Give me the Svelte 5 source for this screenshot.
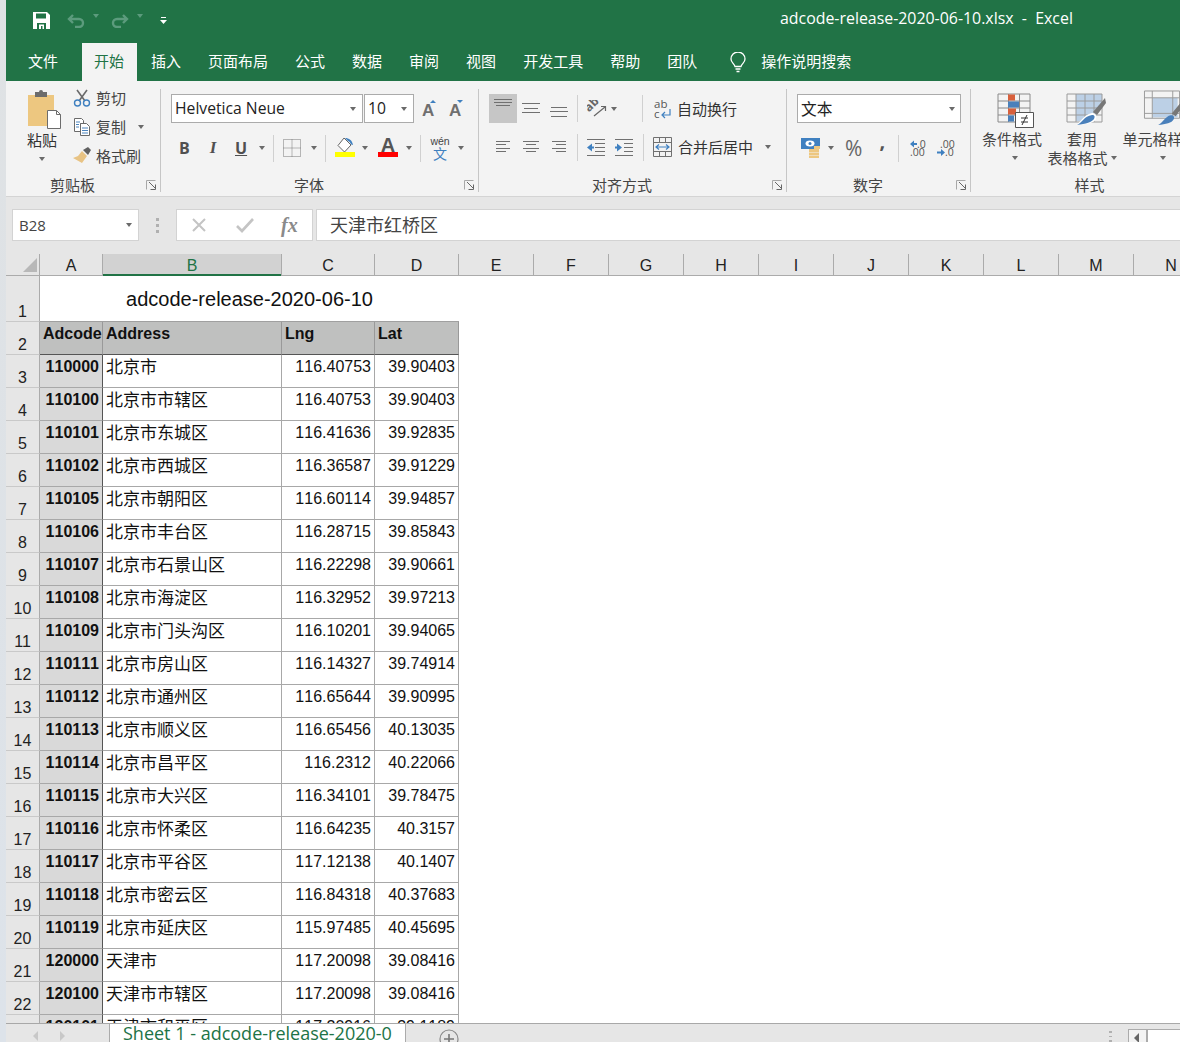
<script>
  const rows = [
    ['110000','北京市','116.40753','39.90403'],['110100','北京市市辖区','116.40753','39.90403'],
    ['110101','北京市东城区','116.41636','39.92835'],['110102','北京市西城区','116.36587','39.91229'],
    ['110105','北京市朝阳区','116.60114','39.94857'],['110106','北京市丰台区','116.28715','39.85843'],
    ['110107','北京市石景山区','116.22298','39.90661'],['110108','北京市海淀区','116.32952','39.97213'],
    ['110109','北京市门头沟区','116.10201','39.94065'],['110111','北京市房山区','116.14327','39.74914'],
    ['110112','北京市通州区','116.65644','39.90995'],['110113','北京市顺义区','116.65456','40.13035'],
    ['110114','北京市昌平区','116.2312','40.22066'],['110115','北京市大兴区','116.34101','39.78475'],
    ['110116','北京市怀柔区','116.64235','40.3157'],['110117','北京市平谷区','117.12138','40.1407'],
    ['110118','北京市密云区','116.84318','40.37683'],['110119','北京市延庆区','115.97485','40.45695'],
    ['120000','天津市','117.20098','39.08416'],['120100','天津市市辖区','117.20098','39.08416'],
    ['120101','天津市和平区','117.20916','39.1189']
  ];
  const tabs = ['插入','页面布局','公式','数据','审阅','视图','开发工具','帮助','团队'];
  const cols = ['E','F','G','H','I','J','K','L','M','N'];
</script>

{#snippet launcher()}
  <svg class="launch" width="11" height="10" viewBox="0 0 11 10">
    <path d="M.5 9.500V.5h9" fill="none" stroke="#a8a8a8"/>
    <path d="M3 2l6 6M9.500 4.500v5h-5" fill="none" stroke="#666"/>
  </svg>
{/snippet}

{#snippet lines(items)}
  <svg width="20" height="18" viewBox="0 0 20 18">
    {#each items as l}<path d="M{l[0]} {l[2]}.5H{l[1]}" stroke="#707070" fill="none"/>{/each}
  </svg>
{/snippet}

<div class="page">
  <div class="strip"></div>
  <div class="main">
    <header class="title">
      <div class="qat">
        <svg class="save" width="17" height="17" viewBox="0 0 17 17"><path fill="#fff" d="M0 0h14l3 3v14H0z"/><path fill="#217346" d="M3 1.500h10v5H3zM4 11h9v6H4z"/><path fill="#fff" d="M6 12.500h5V17H9.500v-3H8v3H6z"/></svg>
        <svg class="undo" width="18" height="14" viewBox="0 0 18 14"><path d="M6 1L2 5l4 4M2.500 5H12a4 4 0 0 1 0 8H8" fill="none" stroke="#5c9b7d" stroke-width="2.400"/></svg>
        <i class="car dim"></i>
        <svg class="redo" width="18" height="14" viewBox="0 0 18 14"><path d="M12 1l4 4-4 4M15.500 5H6a4 4 0 0 0 0 8h4" fill="none" stroke="#5c9b7d" stroke-width="2.400"/></svg>
        <i class="car dim"></i>
        <svg class="cust" width="7" height="7" viewBox="0 0 7 7"><path d="M1 .5h5" stroke="#fff"/><path d="M0 3h7L3.500 7z" fill="#fff"/></svg>
      </div>
      <div class="doc">adcode-release-2020-06-10.xlsx&nbsp; -&nbsp; Excel</div>
    </header>

    <nav class="tabs">
      <span class="tab file">文件</span>
      <span class="tab on">开始</span>
      {#each tabs as t}<span class="tab">{t}</span>{/each}
      <svg class="bulb" width="16" height="21" viewBox="0 0 16 21"><path d="M5 14.500C4 11.500 1 10.500 1 7a7 7 0 0 1 14 0c0 3.500-3 4.500-4 7.500z" fill="none" stroke="#fff" stroke-width="1.300"/><path d="M5.500 17h5M6.500 19.500h3" stroke="#fff" stroke-width="1.300"/></svg>
      <span class="search">操作说明搜索</span>
    </nav>

    <section class="ribbon">
      <div class="group g-clip">
        <div class="body clip">
          <div class="paste">
            <svg width="36" height="42" viewBox="0 0 36 42"><path d="M2 8h26v31H2z" fill="#edc780"/><path d="M9 5h4a2 2 0 0 1 4 0h4v5H9z" fill="#6c6c6c"/><path d="M21.500 23.500h9l4 4v14h-13z" fill="#fff" stroke="#6c6c6c"/><path d="M30.500 23.500v4h4" fill="none" stroke="#6c6c6c"/></svg>
            <span class="pl">粘贴</span>
            <i class="car"></i>
          </div>
          <div class="small">
            <div class="sm"><svg width="18" height="18" viewBox="0 0 18 18"><path d="M4 1l8 11M14 1L6 12" stroke="#6a6a6a" stroke-width="1.600" fill="none"/><circle cx="4.500" cy="14" r="3" fill="none" stroke="#3f80c0" stroke-width="1.400"/><circle cx="13.500" cy="14" r="3" fill="none" stroke="#3f80c0" stroke-width="1.400"/></svg><span>剪切</span></div>
            <div class="sm"><svg width="18" height="18" viewBox="0 0 18 18"><path d="M1.500.5h7l2 2v3h-3v8h-6z" fill="#fff" stroke="#6a6a6a"/><path d="M7.500 5.500h6l3 3v9h-9z" fill="#fff" stroke="#6a6a6a"/><path d="M9 10h6M9 12.500h6M9 15h6M3 4h4M3 6.500h3M3 9h3" stroke="#4c84bd"/></svg><span>复制</span><i class="car m12"></i></div>
            <div class="sm"><svg width="18" height="18" viewBox="0 0 18 18"><path d="M10 3l5-3 3 3-3 5z" fill="#606060"/><path d="M9 4l5 5-5 7-9-5 5-2z" fill="#e8c384"/></svg><span>格式刷</span></div>
          </div>
        </div>
        <div class="lab"><i></i><b>剪贴板</b>{@render launcher()}</div>
      </div>

      <div class="group g-font">
        <div class="body stack">
          <div class="r1">
            <div class="sel fn"><span>Helvetica Neue</span><i class="car"></i></div>
            <div class="sel fs"><span>10</span><i class="car"></i></div>
            <svg class="ga" width="15" height="20" viewBox="0 0 15 20"><text x="0" y="17" class="bigA">A</text><path d="M8 4l3-3 3 3z" fill="#3f80c0"/></svg>
            <svg class="sa" width="15" height="20" viewBox="0 0 15 20"><text x="0" y="17" class="bigA">A</text><path d="M8 1h6l-3 3z" fill="#3f80c0"/></svg>
          </div>
          <div class="r2">
            <span class="bi bb">B</span><span class="bi ii">I</span><span class="bi uu">U</span>
            <i class="car c-u"></i><em class="sep"></em>
            <svg class="bord" width="18" height="18" viewBox="0 0 18 18"><path d="M.5.500h17v17H.5zM9 .5v17M.5 9h17" fill="none" stroke="#777" stroke-dasharray="1 1"/></svg>
            <i class="car c-b"></i><em class="sep s2"></em>
            <svg class="fill" width="20" height="22" viewBox="0 0 20 22"><path d="M9 1l7 7-6.500 7L3 8.500z" fill="#fff" stroke="#666"/><path d="M10 1c4 0 7 2 8 7-3 0-2-3-5-4z" fill="#3f80c0"/><path d="M0 15h20v5H0z" fill="#ffff00"/></svg>
            <i class="car c-f"></i>
            <div class="fc"><span>A</span><u></u></div>
            <i class="car c-a"></i><em class="sep s3"></em>
            <div class="wen"><span class="w1">wén</span><span class="w2">文</span></div>
            <i class="car c-w"></i>
          </div>
        </div>
        <div class="lab"><i></i><b>字体</b>{@render launcher()}</div>
      </div>

      <div class="group g-align">
        <div class="body stack">
          <div class="ar1">
            <div class="hi">{@render lines([[1,19,3],[1,19,6],[3,17,9]])}</div>
            <div class="ai">{@render lines([[1,19,3],[3,17,8],[1,19,12]])}</div>
            <div class="ai">{@render lines([[2,18,7],[1,19,11],[2,18,16]])}</div>
            <em class="sep v"></em>
            <svg class="ori" width="20" height="18" viewBox="0 0 20 18"><text x="0" y="0" transform="translate(2 11) rotate(-45) translate(-1 1)" class="abt">ab</text><path d="M7 16L18 7M14 6.500h4.500V11" stroke="#666" fill="none" stroke-width="1.200"/></svg>
            <i class="car c-o"></i>
            <em class="sep v w2s"></em>
            <svg class="wrap" width="18" height="22" viewBox="0 0 18 22"><text x="0" y="10" class="abc">ab</text><text x="0" y="20" class="abc">c</text><path d="M16 11v6H9M11 14l-3 3 3 3" stroke="#3f80c0" fill="none" stroke-width="1.200"/></svg>
            <span class="awt">自动换行</span>
          </div>
          <div class="ar2">
            <div class="ai">{@render lines([[3,17,3],[3,13,6],[3,17,10],[3,13,13]])}</div>
            <div class="ai">{@render lines([[2,18,3],[5,15,6],[2,18,10],[5,15,13]])}</div>
            <div class="ai">{@render lines([[3,17,3],[7,17,6],[3,17,10],[7,17,13]])}</div>
            <em class="sep v2"></em>
            <svg class="ind" width="18" height="17" viewBox="0 0 18 17"><path d="M0 .5h18M8 4.500h10M8 8.500h10M8 12.500h10M0 16.500h18" stroke="#707070"/><path d="M0 8.500l5-4v3h2v2H5v3z" fill="#3f80c0"/></svg>
            <svg class="ind ind2" width="18" height="17" viewBox="0 0 18 17"><path d="M0 .5h18M9 4.500h9M9 8.500h9M9 12.500h9M0 16.500h18" stroke="#707070"/><path d="M7 8.500l-5-4v3H0v2h2v3z" fill="#3f80c0"/></svg>
            <em class="sep v2 s4"></em>
            <svg class="merge" width="19" height="20" viewBox="0 0 19 20"><path d="M.5.500h18v19H.5zM.5 5.500h18M.5 14.500h18M6.500.5v5M12.500.5v5M6.500 14.500v5M12.500 14.500v5" fill="none" stroke="#707070"/><path d="M3 10h13M6 7.500L3 10l3 2.500M13 7.500l3 2.500-3 2.500" fill="none" stroke="#3f80c0" stroke-width="1.200"/></svg>
            <span class="mgt">合并后居中</span>
            <i class="car c-m"></i>
          </div>
        </div>
        <div class="lab"><i></i><b>对齐方式</b>{@render launcher()}</div>
      </div>

      <div class="group g-num">
        <div class="body stack">
          <div class="sel nf"><span>文本</span><i class="car"></i></div>
          <div class="nr">
            <svg class="acc" width="20" height="20" viewBox="0 0 20 20"><path d="M0 0h19v11H0z" fill="#3f80c0"/><ellipse cx="9" cy="5.500" rx="4.500" ry="3" fill="#fff"/><circle cx="9" cy="5.500" r="1.500" fill="#3f80c0"/><path d="M8 11h10v3H8zM8 14.500h10v2.500H8zM8 17.500h10V20H8z" fill="#edc780"/><path d="M13 8h6v3h-6z" fill="#edc780"/></svg>
            <i class="car c-ac"></i>
            <span class="pct">%</span>
            <span class="cma">,</span>
            <em class="sep v3"></em>
            <svg class="dec" width="18" height="18" viewBox="0 0 18 18"><path d="M1 5l4-3.500V4h3v2H5v2.500z" fill="#3f80c0"/><text x="8" y="9" class="dt">.0</text><text x="1" y="17" class="dt">.00</text></svg>
            <svg class="dec" width="18" height="18" viewBox="0 0 18 18"><text x="3" y="9" class="dt">.00</text><path d="M8 13.500L4 10v2.500H0v2h4V17z" fill="#3f80c0"/><text x="8" y="17" class="dt">.0</text></svg>
          </div>
        </div>
        <div class="lab"><i></i><b>数字</b>{@render launcher()}</div>
      </div>

      <div class="group g-sty">
        <div class="body sty">
          <div class="big b1">
            <svg width="38" height="36" viewBox="0 0 38 36"><path d="M1 1h32v28H1zM1 8h32M1 15h32M1 22h32M11.500 1v28M22.500 1v28" fill="none" stroke="#8a8a8a"/><path d="M11 1.500h7v6h-7zM11 15.500h8v6h-8z" fill="#d8603c"/><path d="M11 8.500h11v6H11zM11 22.500h6v6h-6z" fill="#4a80bb"/><path d="M18.500 19.500h18v15h-18z" fill="#fff" stroke="#555"/><path d="M24 25h7M24 29h7M30 22l-5 10" stroke="#333" fill="none"/></svg>
            <span>条件格式</span>
            <i class="car cb"></i>
          </div>
          <div class="big b2">
            <svg width="40" height="36" viewBox="0 0 40 36"><path d="M10 1h26v14l-12 13H10z" fill="#bcd0e6"/><path d="M1 1h35v28H1zM1 8h35M1 15h35M1 22h35M10 1v28M19 1v28M28 1v28" fill="none" stroke="#9a9a9a"/><path d="M39 5l-12 14 4 3 9-12z" fill="#777"/><path d="M26 20c3 0 5 2 4 6-1 4-10 5-20 6 5-3 7-10 16-12z" fill="#fff"/><path d="M26 22c3 0 3 2 2 4-2 3-8 5-17 6 5-2 7-9 15-10z" fill="#4a80bb"/></svg>
            <span>套用</span>
            <div class="bt"><span>表格格式</span><i class="car"></i></div>
          </div>
          <div class="big b3">
            <svg width="40" height="40" viewBox="0 0 40 40"><path d="M9 8h26v20H9z" fill="#bcd0e6"/><path d="M1 1h36v28H1zM1 8h36M1 24h36M9 1v28M30 1v28" fill="none" stroke="#9a9a9a"/><path d="M39 12l-10 12 4 3 7-10z" fill="#777"/><path d="M28 26c3 0 4 2 3 4-2 4-8 5-16 6 5-2 7-9 13-10z" fill="#4a80bb"/></svg>
            <span>单元格样式</span>
            <i class="car cb"></i>
          </div>
        </div>
        <div class="lab"><i></i><b>样式</b><i></i></div>
      </div>
    </section>

    <div class="fbar">
      <div class="name"><span>B28</span><i class="car"></i></div>
      <div class="grip"><i></i><i></i><i></i></div>
      <div class="fxbox">
        <svg width="16" height="16" viewBox="0 0 16 16"><path d="M2 2l12 12M14 2L2 14" stroke="#c4c4c4" stroke-width="2" fill="none"/></svg>
        <svg width="20" height="16" viewBox="0 0 20 16"><path d="M2 9l5 5L18 2" stroke="#c4c4c4" stroke-width="2.600" fill="none"/></svg>
        <span class="fx">fx</span>
      </div>
      <div class="finput">天津市红桥区</div>
    </div>

    <div class="colhead">
      <div class="corner"><svg width="14" height="14" viewBox="0 0 14 14"><path d="M14 0v14H0z" fill="#b8b8b8"/></svg></div>
      <div class="ch ca">A</div><div class="ch cbb act">B</div><div class="ch cc">C</div><div class="ch cd">D</div>
      {#each cols as c}<div class="ch ce">{c}</div>{/each}
    </div>

    <div class="sheet">
      <div class="row r-title">
        <div class="rn">1</div>
        <div class="merged">adcode-release-2020-06-10</div>
      </div>
      <div class="row">
        <div class="rn">2</div>
        <div class="c a hd">Adcode</div><div class="c b hd">Address</div><div class="c cl hd">Lng</div><div class="c dl hd">Lat</div>
      </div>
      {#each rows as r, i}
        <div class="row">
          <div class="rn">{i + 3}</div>
          <div class="c a code">{r[0]}</div>
          <div class="c b addr">{r[1]}</div>
          <div class="c cl num">{r[2]}</div>
          <div class="c dl num">{r[3]}</div>
        </div>
      {/each}
    </div>

    <footer class="tabbar">
      <div class="nav"><i class="la"></i><i class="ra"></i></div>
      <div class="stab">Sheet 1 - adcode-release-2020-0</div>
      <svg class="plus" width="20" height="20" viewBox="0 0 20 20"><circle cx="10" cy="10" r="9" fill="none" stroke="#8a8a8a" stroke-width="1.200"/><path d="M10 5v10M5 10h10" stroke="#777" stroke-width="1.600"/></svg>
      <div class="grip g2"><i></i><i></i><i></i></div>
      <div class="hs"><i class="la2"></i></div>
    </footer>
  </div>
</div>

<style>
  :global(body) { margin: 0; background: #fff; }
  * { box-sizing: border-box; }
  i, em { font-style: normal; display: block; }
  .page { display: flex; width: 1180px; height: 1042px; overflow: hidden; font-family: "Liberation Sans", "Noto Sans CJK SC", sans-serif; }
  .strip { width: 6px; flex: none; background: linear-gradient(#dfe2e4, #dde3ea); }
  .main { width: 1174px; flex: none; display: flex; flex-direction: column; height: 1042px; overflow: hidden; }

  .car { width: 0; height: 0; border: 3.5px solid transparent; border-top: 4px solid #6a6a6a; border-bottom: 0; flex: none; }
  .car.dim { border-top-color: #5c9b7d; }

  .title { height: 43px; flex: none; background: #217346; display: flex; align-items: flex-start; color: #fff; }
  .qat { display: flex; align-items: center; height: 37px; padding-left: 27px; }
  .save { margin-top: 3px; }
  .undo { margin: 4px 0 0 17px; }
  .qat .car { margin: 0 0 5px 8px; }
  .redo { margin: 4px 0 0 12px; }
  .cust { margin: 4px 0 0 17px; }
  .doc { margin-left: 613px; font: 15.900px/37px "Open Sans", sans-serif; white-space: nowrap; }

  .tabs { height: 38px; flex: none; background: #217346; display: flex; padding-left: 9px; color: #fff; font: 15px/36px "Noto Sans CJK SC", sans-serif; white-space: nowrap; }
  .tab { padding: 0 13px; margin-right: 1px; }
  .tab.file { margin-right: 11px; }
  .tab.on { background: #f3f3f3; color: #217346; padding: 0 13px 0 12px; }
  .bulb { margin: 9px 0 0 19px; }
  .search { margin-left: 15px; }

  .ribbon { height: 116px; flex: none; background: #f3f3f3; display: flex; padding-top: 8px; border-bottom: 1px solid #d4d4d4; }
  .group { height: 103px; display: flex; flex-direction: column; border-right: 1px solid #c6c6c6; flex: none; }
  .g-clip { width: 155px; }
  .g-font { width: 318px; }
  .g-align { width: 308px; }
  .g-num { width: 184px; }
  .g-sty { width: 258px; border: 0; }
  .body { height: 87px; flex: none; }
  .lab { display: grid; grid-template-columns: 1fr auto 1fr; align-items: center; height: 16px; padding-right: 3px; }
  .lab b { font: 400 15px/17px "Noto Sans CJK SC", sans-serif; color: #444; margin-right: 18px; }
  .launch { justify-self: end; }

  .clip { display: flex; }
  .paste { width: 36px; margin-left: 18px; display: flex; flex-direction: column; align-items: center; font: 15px/20px "Noto Sans CJK SC", sans-serif; color: #333; }
  .paste svg { margin-left: 3px; margin-top: -2px; flex: none; }
  .pl { margin-top: 1px; }
  .paste .car { margin-top: 7px; }
  .small { margin-left: 13px; display: flex; flex-direction: column; gap: 11px; }
  .sm { display: flex; align-items: center; height: 18px; gap: 5px; font: 15px/18px "Noto Sans CJK SC", sans-serif; color: #444; }
  .m12 { margin-left: 7px; }

  .stack { display: flex; flex-direction: column; padding-top: 5px; }
  .g-font .stack { padding-left: 10px; }
  .r1 { display: flex; align-items: center; height: 29px; }
  .sel { height: 29px; background: #fff; border: 1px solid #ababab; display: flex; align-items: center; font: 15.700px/27px "Open Sans", sans-serif; color: #222; justify-content: space-between; padding: 0 6px 0 3px; flex: none; }
  .fn { width: 192px; }
  .fs { width: 50px; margin-left: 1px; }
  .ga { margin-left: 8px; }
  .sa { margin-left: 12px; }
  .bigA { font: 700 17px "Liberation Sans", sans-serif; fill: #6f6f6f; }
  .r2 { display: flex; align-items: center; height: 28px; margin-top: 11px; }
  .bi { font: 700 16px/20px "Open Sans", sans-serif; color: #505050; text-align: center; width: 10px; }
  .bb { margin-left: 8px; }
  .ii { margin-left: 19px; font-style: italic; font-family: "Liberation Serif", serif; font-size: 17px; }
  .uu { margin-left: 17px; text-decoration: underline; width: 12px; }
  .c-u { margin-left: 12px; }
  .sep { width: 1px; height: 27px; background: #d0d0d0; flex: none; }
  .r2 .sep { margin-left: 8px; }
  .bord { margin-left: 9px; }
  .c-b { margin-left: 10px; }
  .r2 .s2 { margin-left: 8px; }
  .fill { margin-left: 9px; }
  .c-f { margin-left: 7px; }
  .fc { width: 20px; margin: -2px 0 0 10px; display: flex; flex-direction: column; align-items: center; }
  .fc span { font: 700 20px/16px "Liberation Sans", sans-serif; color: #555; height: 15px; }
  .fc u { display: block; width: 20px; height: 5px; background: #f00; }
  .c-a { margin-left: 8px; }
  .r2 .s3 { margin-left: 8px; }
  .wen { width: 16px; margin-left: 11px; display: flex; flex-direction: column; align-items: center; }
  .w1 { font: 10.500px/10px "Liberation Sans", sans-serif; color: #444; white-space: nowrap; }
  .w2 { font: 14px/14px "Noto Sans CJK SC", sans-serif; color: #3f80c0; }
  .c-w { margin-left: 10px; }

  .g-align .stack { padding-left: 10px; }
  .ar1, .ar2 { display: flex; align-items: center; height: 29px; white-space: nowrap; }
  .ar2 { margin-top: 10px; height: 28px; }
  .hi { width: 28px; height: 29px; background: #c6c6c6; display: flex; justify-content: center; padding-top: 2px; flex: none; }
  .ai { width: 28px; display: flex; justify-content: center; height: 18px; flex: none; }
  .sep.v { margin-left: 4px; }
  .ori { margin-left: 9px; flex: none; }
  .abt { font: 700 12px "Open Sans", sans-serif; fill: #666; }
  .c-o { margin-left: 4px; }
  .sep.w2s { margin-left: 25px; }
  .wrap { margin-left: 11px; flex: none; }
  .abc { font: 400 11.500px "Open Sans", sans-serif; fill: #555; }
  .awt, .mgt { font: 15px/20px "Noto Sans CJK SC", sans-serif; color: #333; flex: none; }
  .awt { margin-left: 5px; }
  .sep.v2 { margin-left: 4px; height: 27px; }
  .ind { margin-left: 9px; flex: none; }
  .ind2 { margin-left: 10px; }
  .sep.s4 { margin-left: 10px; }
  .merge { margin-left: 9px; flex: none; }
  .mgt { margin-left: 6px; }
  .c-m { margin-left: 12px; }

  .g-num .stack { padding-left: 10px; }
  .nf { width: 164px; padding-right: 5px; font-family: "Noto Sans CJK SC", sans-serif; }
  .nr { display: flex; align-items: center; height: 28px; margin-top: 11px; }
  .acc { margin-left: 4px; }
  .c-ac { margin-left: 7px; }
  .pct { font: 21px/24px "Open Sans", sans-serif; color: #666; margin-left: 11px; }
  .cma { font: 700 20px/20px "Open Sans", sans-serif; color: #555; margin: -14px 0 0 17px; }
  .sep.v3 { margin-left: 13px; }
  .dec { margin-left: 10px; flex: none; }
  .dt { font: 400 10.500px "Open Sans", sans-serif; fill: #555; }

  .sty { display: flex; }
  .big { display: flex; flex-direction: column; align-items: center; font: 15px/19px "Noto Sans CJK SC", sans-serif; color: #444; flex: none; }
  .big svg { flex: none; height: 36px; margin-top: 4px; }
  .big .car { margin-top: 8px; }
  .big .cb { margin-left: 6px; }
  .b1 { width: 62px; margin-left: 10px; }
  .b1 svg { margin-left: 7px; }
  .b2 { width: 62px; margin-left: 8px; }
  .b2 svg { margin-left: 8px; }
  .bt { display: flex; align-items: center; white-space: nowrap; }
  .bt .car { margin: 0 0 0 3px; }
  .b3 { margin-left: 9px; width: 76px; }
  .b3 svg { margin: 1px 0 0 6px; height: 39px; }
  .b3 span { white-space: nowrap; }

  .fbar { height: 57px; flex: none; background: #e6e6e6; display: flex; align-items: flex-start; padding: 12px 0 0 6px; }
  .name { width: 127px; flex: none; height: 32px; background: #fff; border: 1px solid #d3d3d3; display: flex; align-items: center; justify-content: space-between; padding: 0 6px 0 6px; font: 15px "Open Sans", sans-serif; color: #444; }
  .grip { display: flex; flex-direction: column; gap: 3px; width: 4px; margin: 9px 0 0 17px; flex: none; }
  .grip i { width: 3px; height: 3px; background: #b0b0b0; }
  .fxbox { width: 137px; flex: none; height: 32px; margin-left: 16px; background: #fff; border: 1px solid #d3d3d3; display: flex; align-items: center; padding-left: 14px; }
  .fxbox svg + svg { margin-left: 28px; }
  .fx { margin-left: 26px; font: italic 700 20px "Liberation Serif", serif; color: #8a8a8a; }
  .finput { flex: 1; height: 32px; margin-left: 3px; background: #fff; border: 1px solid #d3d3d3; border-right: 0; padding-left: 13px; font: 18px/28px "Noto Sans CJK SC", sans-serif; color: #444; }

  .colhead { height: 22px; flex: none; display: flex; background: #e6e6e6; border-bottom: 1px solid #ababab; font: 16px/23px "Liberation Sans", sans-serif; color: #222; }
  .corner { width: 34px; flex: none; border-right: 1px solid #ababab; display: flex; align-items: flex-end; justify-content: flex-end; padding: 0 2px 3px 0; }
  .ch { flex: none; width: 75px; text-align: center; border-right: 1px solid #ababab; }
  .ca { width: 63px; }
  .cbb { width: 179px; }
  .cc { width: 93px; }
  .cd { width: 84px; }
  .act { background: #d2d2d2; color: #217346; box-shadow: inset 0 -2px #217346; height: 22px; }

  .sheet { flex: 1; min-height: 0; overflow: hidden; background: #fff; }
  .row { display: flex; height: 33px; }
  .r-title { height: 46px; }
  .rn { width: 34px; flex: none; background: #e6e6e6; border-right: 1px solid #ababab; border-bottom: 1px solid #c9c9c9; display: flex; align-items: flex-end; justify-content: center; font: 16px/18px "Liberation Sans", sans-serif; color: #222; }
  .merged { width: 419px; height: 46px; display: flex; align-items: center; justify-content: center; font: 20px "Liberation Sans", sans-serif; font-kerning: none; color: #111; border-bottom: 1px solid #a0a0a0; padding-top: 1px; }
  .c { flex: none; height: 33px; border-right: 1px solid #a8a8a8; border-bottom: 1px solid #a8a8a8; font: 16px/22px "Liberation Sans", "Noto Sans CJK SC", sans-serif; font-kerning: none; color: #111; padding: 1px 3px 0; white-space: nowrap; overflow: hidden; }
  .a { width: 63px; border-right-color: #555; background: #d9d9d9; }
  .b { width: 179px; }
  .cl { width: 93px; }
  .dl { width: 84px; }
  .hd { background: #bfc0bf; font-weight: 700; border-bottom-color: #555; border-right-color: #999; }
  .hd.a { padding: 1px 0 0 3px; background: #bfc0bf; }
  .code { font-weight: 700; text-align: right; }
  .num { text-align: right; }
  .addr { font: 17px/20px "Noto Sans CJK SC", sans-serif; }

  .tabbar { height: 19px; flex: none; background: #e6e6e6; border-top: 1px solid #a8a8a8; display: flex; overflow: hidden; }
  .nav { width: 104px; flex: none; display: flex; align-items: flex-end; padding: 0 0 1px 27px; gap: 22px; border-right: 1px solid #ababab; }
  .la { border: 5px solid transparent; border-right: 5px solid #c8c8c8; border-left: 0; }
  .ra { border: 5px solid transparent; border-left: 5px solid #c8c8c8; border-right: 0; }
  .stab { width: 296px; flex: none; background: #fff; border-right: 1px solid #ababab; color: #217346; font: 18px/20px "Open Sans", sans-serif; padding-left: 13px; white-space: nowrap; overflow: hidden; margin-top: -1px; }
  .plus { margin: 5px 0 0 33px; flex: none; }
  .g2 { margin: 7px 0 0 650px; }
  .hs { margin: 5px 0 0 15px; width: 60px; height: 20px; border: 1px solid #ababab; border-bottom: 0; background: #fff; display: flex; flex: none; }
  .la2 { width: 19px; height: 20px; background: #f3f3f3; border-right: 2px solid #ababab; }
  .la2::after { content: ""; display: block; width: 0; height: 0; border: 5px solid transparent; border-right: 5px solid #666; border-left: 0; margin: 3px 0 0 5px; }
</style>
